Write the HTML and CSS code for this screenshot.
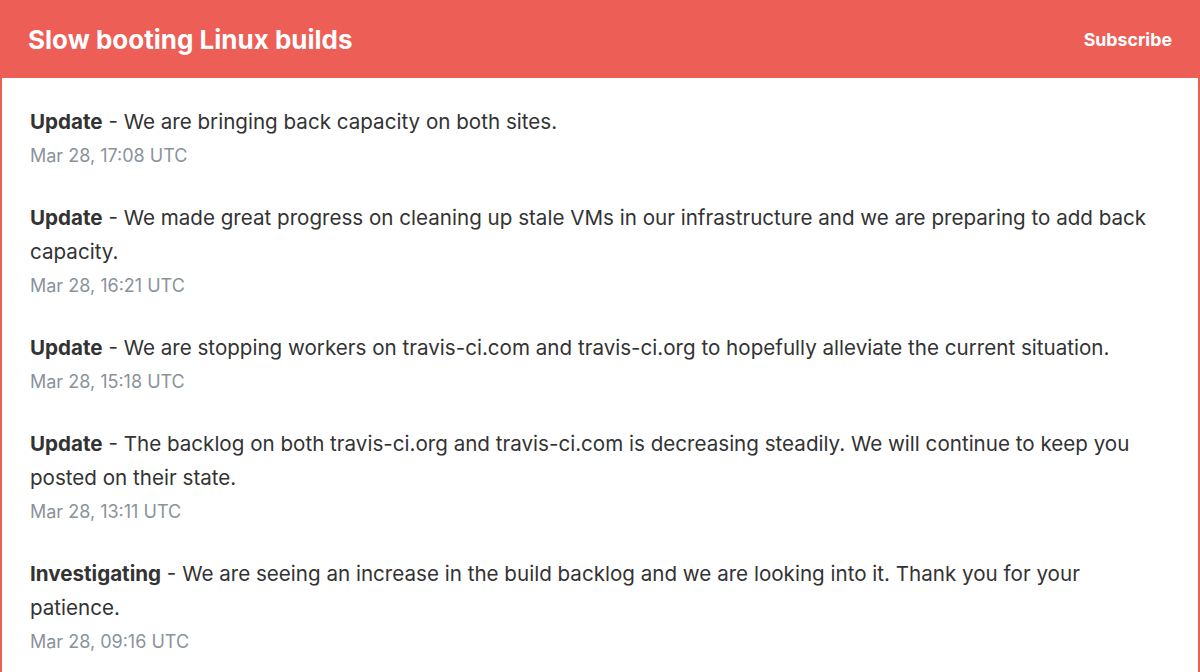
FILE: index.html
```html
<!DOCTYPE html>
<html>
<head>
<meta charset="utf-8">
<link rel="stylesheet" href="styles.css">
</head>
<body>
<div class="incident">
  <header class="incident-header">
    <h1 class="title">Slow booting Linux builds</h1>
    <a class="subscribe">Subscribe</a>
  </header>
  <div class="updates">
    <div class="update">
      <div class="body"><strong>Update</strong> - We are bringing back capacity on both sites.</div>
      <div class="time">Mar 28, 17:08 UTC</div>
    </div>
    <div class="update">
      <div class="body"><strong>Update</strong> - We made great progress on cleaning up stale VMs in our infrastructure and we are preparing to add back capacity.</div>
      <div class="time">Mar 28, 16:21 UTC</div>
    </div>
    <div class="update">
      <div class="body"><strong>Update</strong> - We are stopping workers on travis-ci.com and travis-ci.org to hopefully alleviate the current situation.</div>
      <div class="time">Mar 28, 15:18 UTC</div>
    </div>
    <div class="update">
      <div class="body"><strong>Update</strong> - The backlog on both travis-ci.org and travis-ci.com is decreasing steadily. We will continue to keep you posted on their state.</div>
      <div class="time">Mar 28, 13:11 UTC</div>
    </div>
    <div class="update">
      <div class="body"><strong>Investigating</strong> - We are seeing an increase in the build backlog and we are looking into it. Thank you for your patience.</div>
      <div class="time">Mar 28, 09:16 UTC</div>
    </div>
  </div>
</div>
</body>
</html>
```
FILE: styles.css
```css
html, body {
  margin: 0;
  padding: 0;
  background: #ffffff;
  font-family: "Inter", "Open Sans", sans-serif;
  overflow: hidden;
}
.incident {
  width: 1200px;
  height: 672px;
  box-sizing: border-box;
  border-left: 2px solid #ec5f57;
  border-right: 2px solid #ec5f57;
}
.incident-header {
  height: 78px;
  background: #ec5e56;
  margin: 0 -2px;
  padding: 0 28px 0 28px;
  display: flex;
  align-items: center;
  justify-content: space-between;
  color: #ffffff;
}
.title {
  margin: 0;
  font-size: 26px;
  font-weight: 700;
}
.subscribe {
  font-size: 17.8px;
  font-weight: 700;
  color: #ffffff;
}
.updates {
  padding: 27px 28px 0 28px;
}
.update {
  margin-bottom: 28px;
}
.body {
  font-size: 20.6px;
  line-height: 34px;
  color: #333333;
}
.body strong {
  font-weight: 700;
}
.time {
  font-size: 18px;
  line-height: 34px;
  color: #8a939c;
}
```
